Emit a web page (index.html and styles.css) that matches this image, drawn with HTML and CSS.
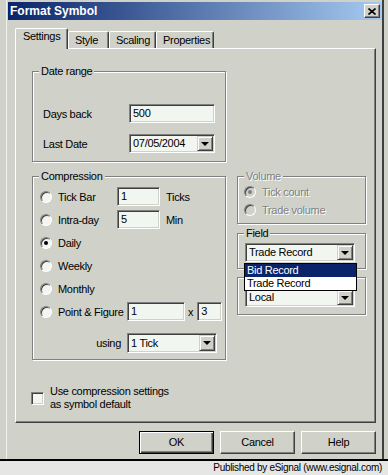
FILE: index.html
```html
<!DOCTYPE html>
<html lang="en">
<head>
  <meta charset="UTF-8" />
  <title>Format Symbol</title>
  <link rel="stylesheet" href="styles.css">
</head>
<body>
  <div class="screen">
    <div class="dialog">

      <div class="titlebar">
        <span class="title">Format Symbol</span>
        <span class="close-btn">
          <svg width="8" height="7" viewBox="0 0 8 7"><path d="M0.5 0.5 L7.5 6.5 M7.5 0.5 L0.5 6.5" stroke="#000" stroke-width="1.6" fill="none"/></svg>
        </span>
      </div>

      <div class="tabs">
        <div class="tab active" style="width:53px">Settings</div>
        <div class="tab" style="width:41px">Style</div>
        <div class="tab" style="width:47px">Scaling</div>
        <div class="tab" style="width:58px">Properties</div>
      </div>

      <div class="panel">
        <div class="columns">

          <!-- left column -->
          <div class="col-left">
            <fieldset class="group date-range">
              <legend>Date range</legend>
              <div class="date-body">
                <div class="field-row">
                  <span class="field-label">Days back</span>
                  <div class="textbox w86">500</div>
                </div>
                <div class="field-row">
                  <span class="field-label">Last Date</span>
                  <div class="combo w86"><span>07/05/2004</span><span class="drop-btn"></span></div>
                </div>
              </div>
            </fieldset>

            <fieldset class="group compression">
              <legend>Compression</legend>
              <div class="comp-body">
                <div class="opt-row">
                  <span class="radio-label"><span class="radio"></span>Tick Bar</span>
                  <div class="textbox w43">1</div>
                  <span class="unit">Ticks</span>
                </div>
                <div class="opt-row">
                  <span class="radio-label"><span class="radio"></span>Intra-day</span>
                  <div class="textbox w43">5</div>
                  <span class="unit">Min</span>
                </div>
                <div class="opt-row">
                  <span class="radio-label"><span class="radio on"></span>Daily</span>
                </div>
                <div class="opt-row">
                  <span class="radio-label"><span class="radio"></span>Weekly</span>
                </div>
                <div class="opt-row">
                  <span class="radio-label"><span class="radio"></span>Monthly</span>
                </div>
                <div class="opt-row">
                  <span class="radio-label wide"><span class="radio"></span>Point &amp; Figure</span>
                  <div class="textbox w58">1</div>
                  <span class="times">x</span>
                  <div class="textbox w25">3</div>
                </div>
                <div class="using-row">
                  <span class="using-label">using</span>
                  <div class="combo w90 tall"><span>1 Tick</span><span class="drop-btn"></span></div>
                </div>
              </div>
            </fieldset>
          </div>

          <!-- right column -->
          <div class="col-right">
            <fieldset class="group volume disabled">
              <legend>Volume</legend>
              <div class="vol-body">
                <div class="vol-row"><span class="radio off on"></span>Tick count</div>
                <div class="vol-row"><span class="radio off"></span>Trade volume</div>
              </div>
            </fieldset>

            <fieldset class="group field-group">
              <legend>Field</legend>
              <div class="select-body">
                <div class="combo w110"><span>Trade Record</span><span class="drop-btn"></span></div>
              </div>
            </fieldset>

            <fieldset class="group zone-group">
              <div class="select-body zone">
                <div class="combo w110"><span>Local</span><span class="drop-btn"></span></div>
              </div>
            </fieldset>

            <div class="dropdown-list">
              <div class="list-item selected">Bid Record</div>
              <div class="list-item">Trade Record</div>
            </div>
          </div>
        </div>

        <div class="check-row">
          <span class="checkbox"></span>
          <span>Use compression settings<br>as symbol default</span>
        </div>
      </div>

      <div class="buttons">
        <div class="btn default">OK</div>
        <div class="btn">Cancel</div>
        <div class="btn">Help</div>
      </div>
    </div>

    <div class="footer">Published by eSignal (www.esignal.com)</div>
  </div>
</body>
</html>
```

FILE: styles.css
```css
body {
  margin: 0;
  font-family: "Liberation Sans", Arial, sans-serif;
  font-size: 11px;
  letter-spacing: -0.3px;
  color: #000;
  background: #d0d2c9;
}
.screen {
  width: 388px;
  height: 475px;
  overflow: hidden;
  display: flex;
  flex-direction: column;
}
.dialog {
  box-sizing: border-box;
  width: 378px;
  height: 459px;
  margin-left: 6px;
  padding: 2px 0 0 1px;
  border-left: 1px solid #f2f2ee;
  border-right: 2px solid #404040;
}

/* title bar */
.titlebar {
  height: 18px;
  display: flex;
  align-items: center;
  justify-content: space-between;
  padding: 0 2px;
  background: linear-gradient(to right, #0a246a, #a6caf0);
  color: #fff;
  font-weight: bold;
  font-size: 12px;
  letter-spacing: 0;
}
.close-btn {
  box-sizing: border-box;
  width: 16px;
  height: 14px;
  display: flex;
  align-items: center;
  justify-content: center;
  background: #d0d2c9;
  border: 1px solid;
  border-color: #fff #404040 #404040 #fff;
  box-shadow: inset -1px -1px #808080;
}

/* tabs */
.tabs {
  display: flex;
  align-items: flex-end;
  height: 20px;
  margin: 8px 0 0 7px;
  position: relative;
  z-index: 1;
}
.tab {
  box-sizing: border-box;
  height: 17px;
  padding: 2px 0 0 6px;
  line-height: 13px;
  border-top: 1px solid #fff;
  border-left: 1px solid #fff;
  border-right: 1px solid #404040;
  border-radius: 2px 2px 0 0;
  box-shadow: inset -1px 0 #808080;
}
.tab.active {
  height: 21px;
  margin-bottom: -1px;
  padding: 1px 0 0 7px;
  background: #d0d2c9;
}

/* tab page */
.panel {
  box-sizing: border-box;
  width: 361px;
  height: 375px;
  margin-left: 7px;
  padding: 16px 0 0 16px;
  border-top: 1px solid #fff;
  border-left: 1px solid #fff;
  border-right: 1px solid #404040;
  border-bottom: 1px solid #404040;
  box-shadow: inset -1px -1px #808080;
}
.columns {
  display: flex;
  align-items: flex-start;
  gap: 11px;
}
.col-left {
  width: 194px;
  display: flex;
  flex-direction: column;
  gap: 8px;
}
.col-right {
  width: 129px;
  margin-top: 105px;
  position: relative;
  display: flex;
  flex-direction: column;
}

/* group boxes */
.group {
  box-sizing: border-box;
  margin: 0;
  padding: 0;
  min-width: 0;
  border: 1px solid #808080;
  box-shadow: 1px 1px 0 #fff, inset 1px 1px 0 #fff;
}
.group legend {
  margin-left: 6px;
  padding: 0 2px;
  line-height: 12px;
  background: #d0d2c9;
}
.date-range { height: 97px; }
.compression { height: 190px; }
.volume { height: 54px; }
.field-group { height: 42px; margin-top: 3px; }
.zone-group { height: 38px; margin-top: 8px; }

.disabled,
.disabled legend {
  color: #808080;
  text-shadow: 1px 1px 0 #fff;
}

/* date range */
.date-body {
  padding: 27px 0 0 10px;
  display: flex;
  flex-direction: column;
  gap: 11px;
}
.field-row {
  display: flex;
  align-items: center;
  height: 19px;
}
.field-label {
  width: 86px;
}

/* edit boxes and combos */
.textbox, .combo {
  box-sizing: border-box;
  height: 19px;
  line-height: 17px;
  padding-left: 3px;
  background: #f2f6f0;
  border: 1px solid;
  border-color: #808080 #fff #fff #808080;
  box-shadow: inset 1px 1px #404040, inset -1px -1px #d0d2c9;
}
.combo {
  display: flex;
  align-items: center;
  justify-content: space-between;
  padding: 1px 1px 1px 3px;
}
.combo.tall { height: 20px; }
.drop-btn {
  box-sizing: border-box;
  width: 16px;
  height: 100%;
  display: flex;
  align-items: center;
  justify-content: center;
  background: #d0d2c9;
  border: 1px solid;
  border-color: #d0d2c9 #404040 #404040 #d0d2c9;
  box-shadow: inset 1px 1px #fff, inset -1px -1px #808080;
}
.drop-btn::after {
  content: "";
  border-left: 4px solid transparent;
  border-right: 4px solid transparent;
  border-top: 4px solid #000;
}
.w25 { width: 25px; }
.w43 { width: 43px; }
.w58 { width: 58px; }
.w86 { width: 86px; }
.w90 { width: 90px; }
.w110 { width: 110px; }

/* compression */
.comp-body {
  padding: 3px 0 0 7px;
}
.opt-row {
  display: flex;
  align-items: center;
  height: 23px;
  white-space: nowrap;
}
.radio-label {
  display: flex;
  align-items: center;
  gap: 6px;
  width: 77px;
  flex: none;
}
.radio-label.wide { width: 87px; }
.unit { margin-left: 6px; }
.times { margin: 0 4px 0 3px; }
.using-row {
  display: flex;
  align-items: center;
  gap: 6px;
  margin-top: 10px;
}
.using-label {
  width: 81px;
  text-align: right;
}

/* radio buttons */
.radio {
  box-sizing: border-box;
  width: 12px;
  height: 12px;
  flex: none;
  display: flex;
  align-items: center;
  justify-content: center;
  border-radius: 50%;
  background: #f2f6f0;
  border: 1px solid;
  border-color: #808080 #fff #fff #808080;
  box-shadow: inset 1px 1px #404040;
}
.radio.on::after {
  content: "";
  width: 4px;
  height: 4px;
  border-radius: 50%;
  background: #000;
}
.radio.off { background: #d0d2c9; }
.radio.off.on::after { background: #808080; }

/* right column */
.vol-body {
  padding: 1px 0 0 6px;
}
.vol-row {
  display: flex;
  align-items: center;
  gap: 6px;
  height: 18px;
  white-space: nowrap;
}
.select-body {
  padding: 4px 0 0 7px;
}
.select-body.zone { padding-top: 10px; }

.dropdown-list {
  position: absolute;
  left: 7px;
  top: 93px;
  width: 113px;
  box-sizing: border-box;
  border: 1px solid #000;
  background: #fff;
}
.list-item {
  height: 13px;
  line-height: 13px;
  padding-left: 2px;
}
.list-item.selected {
  background: #0a246a;
  color: #fff;
}

/* checkbox */
.check-row {
  display: flex;
  align-items: center;
  gap: 6px;
  margin: 25px 0 0 -1px;
  line-height: 13px;
}
.checkbox {
  box-sizing: border-box;
  width: 13px;
  height: 13px;
  background: #f2f6f0;
  border: 1px solid;
  border-color: #808080 #fff #fff #808080;
  box-shadow: inset 1px 1px #404040, inset -1px -1px #d0d2c9;
}

/* buttons */
.buttons {
  display: flex;
  justify-content: flex-end;
  gap: 6px;
  margin-top: 8px;
  padding-right: 6px;
}
.btn {
  box-sizing: border-box;
  width: 75px;
  height: 23px;
  line-height: 21px;
  text-align: center;
  border: 1px solid;
  border-color: #fff #404040 #404040 #fff;
  box-shadow: inset -1px -1px #808080;
}
.btn.default {
  border-color: #000;
  box-shadow: inset 1px 1px #fff, inset -1px -1px #404040, inset -2px -2px #808080;
}

/* footer */
.footer {
  flex: 1;
  border-top: 2px solid #000;
  background: #e6e6e4;
  text-align: right;
  padding-right: 6px;
  line-height: 14px;
  font-size: 10px;
}
```
